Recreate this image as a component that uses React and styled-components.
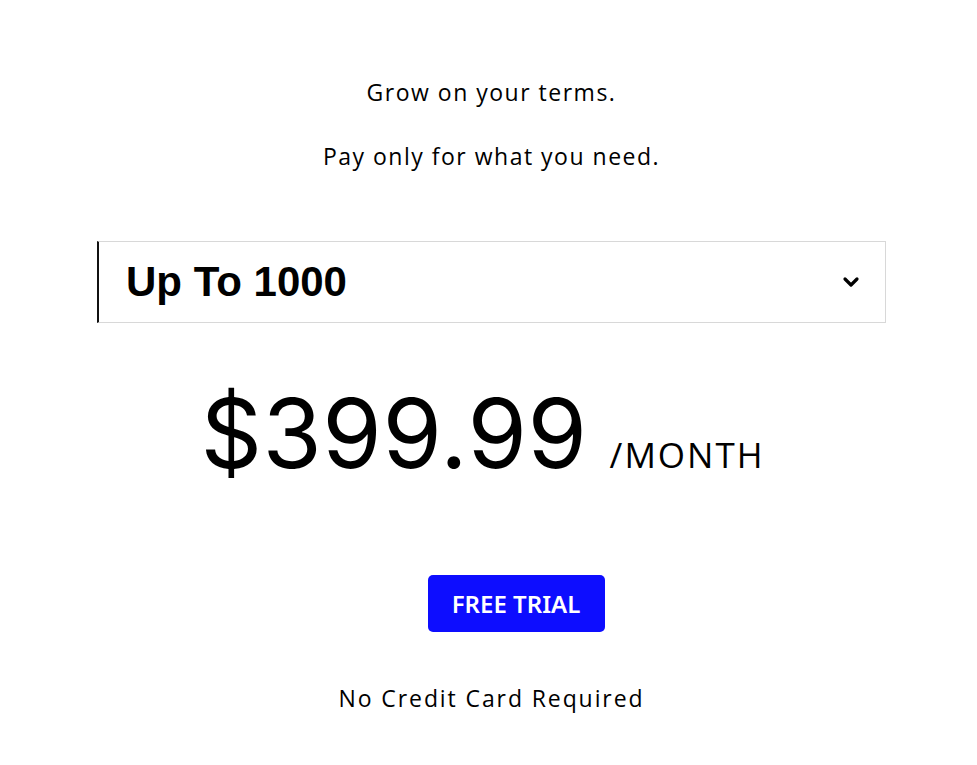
import styled, { createGlobalStyle } from 'styled-components';

const GlobalStyle = createGlobalStyle`
  html, body {
    margin: 0;
    padding: 0;
    background: #fff;
  }
  body {
    font-family: "Open Sans", "Noto Sans", sans-serif;
    color: #000;
  }
`;

const ChevronDown = () => (
  <svg width="18" height="12" viewBox="0 0 18 12">
    <path d="M3 3 L9 9 L15 3" fill="none" stroke="#000" strokeWidth="3.2" strokeLinecap="round" strokeLinejoin="round" />
  </svg>
);

const App = () => {
  return (
    <>
      <GlobalStyle />
      <StPage>
        <StColumn>
          <StTagline>Grow on your terms.</StTagline>
          <StTagline $gap="38px">Pay only for what you need.</StTagline>

          <StSelect>
            <StSelectValue>Up To 1000</StSelectValue>
            <StChevron>
              <ChevronDown />
            </StChevron>
          </StSelect>

          <StPriceRow>
            <StAmount>$399.99</StAmount>
            <StPeriod>/MONTH</StPeriod>
          </StPriceRow>

          <StButton $shift="49px">FREE TRIAL</StButton>

          <StNote>No Credit Card Required</StNote>
        </StColumn>
      </StPage>
    </>
  );
};

export default App;

const StPage = styled.div`
  width: 100%;
  min-height: 765px;
  padding: 76px 91px 0 97px;
  box-sizing: border-box;
`;

const StColumn = styled.div`
  display: flex;
  flex-direction: column;
  align-items: center;
`;

const StTagline = styled.p`
  margin: 0;
  margin-bottom: ${(p) => p.$gap || '32px'};
  font-size: 23px;
  line-height: 32px;
  letter-spacing: 1.5px;
`;

const StSelect = styled.div`
  align-self: stretch;
  display: flex;
  align-items: center;
  justify-content: space-between;
  height: 82px;
  box-sizing: border-box;
  margin-top: 31px;
  border: 1px solid #d8d8d8;
  border-left: 2px solid #111;
  padding: 0 25px 0 27px;
`;

const StSelectValue = styled.span`
  font-family: "Liberation Sans", Arial, sans-serif;
  font-weight: 700;
  font-size: 42px;
  line-height: 1;
`;

const StChevron = styled.span`
  display: flex;
  align-items: center;
`;

const StPriceRow = styled.div`
  display: flex;
  align-items: baseline;
  gap: 22px;
  margin-top: 62px;
  margin-right: 18px;
`;

const StAmount = styled.span`
  font-family: Inter, "Liberation Sans", sans-serif;
  font-size: 96px;
  line-height: 1;
  letter-spacing: 0.5px;
`;

const StPeriod = styled.span`
  font-size: 35px;
  line-height: 1;
  letter-spacing: 2px;
`;

const StButton = styled.button`
  margin-top: 94px;
  margin-left: ${(p) => p.$shift || '0'};
  width: 177px;
  height: 57px;
  border: none;
  border-radius: 5px;
  background: #0d0dff;
  color: #fff;
  font-family: "Noto Sans", "Open Sans", sans-serif;
  font-weight: 600;
  font-size: 24px;
  cursor: pointer;
`;

const StNote = styled.p`
  margin: 50px 0 0;
  font-size: 23px;
  line-height: 32px;
  letter-spacing: 1.9px;
`;
